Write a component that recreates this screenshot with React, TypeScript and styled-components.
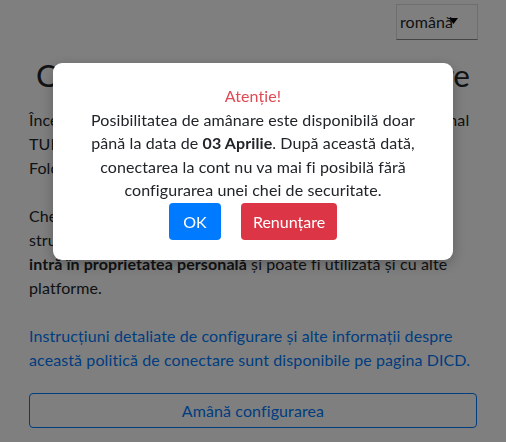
import React from "react";
import styled, { createGlobalStyle } from "styled-components";

const GlobalStyle = createGlobalStyle`
  html, body {
    margin: 0;
    padding: 0;
    background: #fff;
  }
  body {
    font-family: Lato, "Noto Sans", sans-serif;
    color: #212529;
    font-size: 16px;
    line-height: 24px;
    letter-spacing: 0.1px;
  }
`;

const Page = styled.div`
  padding: 4px 29px 0 29px;
`;

const TopBar = styled.div`
  display: flex;
  justify-content: flex-end;
  margin-right: -1px;
`;

const LangSelect = styled.div`
  display: flex;
  align-items: center;
  width: 82px;
  height: 36px;
  box-sizing: border-box;
  padding: 0 3px;
  border: 1px solid #dcdcdc;
  border-bottom: 1px solid #8a8a8a;
  font-size: 16px;
  color: #212529;
`;

const Caret = styled.svg`
  width: 9px;
  height: 6px;
  margin-left: -4px;
  margin-top: -2px;
`;

const Title = styled.h1`
  margin: 16px 0 14px;
  font-size: 31.5px;
  line-height: 38px;
  font-weight: 400;
  text-align: center;
  white-space: nowrap;
  color: #212529;
`;

const Paragraph = styled.p<{ $gap?: number }>`
  margin: 0 0 ${(p) => p.$gap ?? 24}px;
  white-space: nowrap;
`;

const Link = styled.a`
  color: #007bff;
  text-decoration: none;
`;

const OutlineButton = styled.button`
  display: block;
  width: 100%;
  height: 35px;
  border: 1px solid #007bff;
  border-radius: 4px;
  background: transparent;
  color: #007bff;
  font-family: Lato, "Noto Sans", sans-serif;
  font-size: 16px;
  letter-spacing: 0.1px;
`;

const Overlay = styled.div`
  position: fixed;
  inset: 0;
  background: rgba(0, 0, 0, 0.5);
`;

const Modal = styled.div`
  position: fixed;
  top: 63px;
  left: 53px;
  width: 400px;
  box-sizing: border-box;
  padding: 21px 20px 20px;
  background: #fff;
  border-radius: 9px;
  box-shadow: 0 4px 14px rgba(0, 0, 0, 0.25);
  text-align: center;
  line-height: 23.5px;
`;

const Warning = styled.div`
  color: #e04a55;
`;

const Message = styled.div`
  padding: 0 8px;
  color: #212529;
`;

const Actions = styled.div`
  display: flex;
  justify-content: center;
  gap: 20px;
  margin-top: 1px;
`;

const ActionButton = styled.button<{ $tone: "primary" | "danger" }>`
  height: 37px;
  padding: 0 ${(p) => (p.$tone === "primary" ? "14px" : "12px")};
  min-width: ${(p) => (p.$tone === "primary" ? "52px" : "96px")};
  border: none;
  border-radius: 4px;
  color: #fff;
  font-family: Lato, "Noto Sans", sans-serif;
  font-size: 16px;
  background: ${(p) => (p.$tone === "primary" ? "#007bff" : "#dc3545")};
`;

export default function App() {
  return (
    <>
      <GlobalStyle />
      <Page>
        <TopBar>
          <LangSelect>
            română
            <Caret viewBox="0 0 9 6">
              <path d="M0 0h9L4.5 6z" fill="#000" />
            </Caret>
          </LangSelect>
        </TopBar>
        <Title>Configurare cheie de conectare</Title>
        <Paragraph>
          Începând cu 3 Aprilie, pentru conectarea la contul instituțional
          <br />
          TUIASI va fi necesară o cheie de securitate personală.
          <br />
          Folosiți butonul de mai jos pentru a o configura acum.
        </Paragraph>
        <Paragraph>
          Cheia de securitate este un dispozitiv fizic sau o
          <br />
          structură criptografică stocată pe telefon, care
          <br />
          <strong>intră în proprietatea personală</strong> și poate fi utilizată și cu alte
          <br />
          platforme.
        </Paragraph>
        <Paragraph $gap={21}>
          <Link href="#">
            Instrucțiuni detaliate de configurare și alte informații despre
            <br />
            această politică de conectare sunt disponibile pe pagina DICD.
          </Link>
        </Paragraph>
        <OutlineButton>Amână configurarea</OutlineButton>
      </Page>
      <Overlay />
      <Modal>
        <Warning>Atenție!</Warning>
        <Message>
          Posibilitatea de amânare este disponibilă doar până la data de{" "}
          <strong>03 Aprilie</strong>. După această dată, conectarea la cont nu
          va mai fi posibilă fără configurarea unei chei de securitate.
        </Message>
        <Actions>
          <ActionButton $tone="primary">OK</ActionButton>
          <ActionButton $tone="danger">Renunțare</ActionButton>
        </Actions>
      </Modal>
    </>
  );
}
